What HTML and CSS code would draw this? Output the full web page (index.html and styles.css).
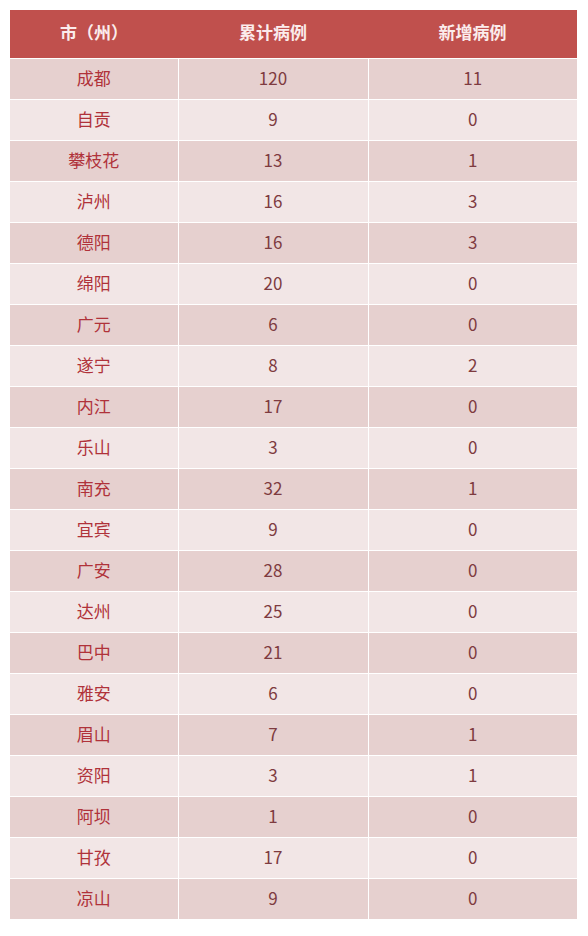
FILE: index.html
```html
<!DOCTYPE html>
<html lang="zh-CN">
<head>
<meta charset="utf-8">
<link rel="stylesheet" href="styles.css">
</head>
<body>
<table class="stats">
  <colgroup><col class="c1"><col class="c2"><col class="c3"></colgroup>
  <thead>
    <tr><th>市（州）</th><th>累计病例</th><th>新增病例</th></tr>
  </thead>
  <tbody>
    <tr><td class="name">成都</td><td>120</td><td>11</td></tr>
    <tr><td class="name">自贡</td><td>9</td><td>0</td></tr>
    <tr><td class="name">攀枝花</td><td>13</td><td>1</td></tr>
    <tr><td class="name">泸州</td><td>16</td><td>3</td></tr>
    <tr><td class="name">德阳</td><td>16</td><td>3</td></tr>
    <tr><td class="name">绵阳</td><td>20</td><td>0</td></tr>
    <tr><td class="name">广元</td><td>6</td><td>0</td></tr>
    <tr><td class="name">遂宁</td><td>8</td><td>2</td></tr>
    <tr><td class="name">内江</td><td>17</td><td>0</td></tr>
    <tr><td class="name">乐山</td><td>3</td><td>0</td></tr>
    <tr><td class="name">南充</td><td>32</td><td>1</td></tr>
    <tr><td class="name">宜宾</td><td>9</td><td>0</td></tr>
    <tr><td class="name">广安</td><td>28</td><td>0</td></tr>
    <tr><td class="name">达州</td><td>25</td><td>0</td></tr>
    <tr><td class="name">巴中</td><td>21</td><td>0</td></tr>
    <tr><td class="name">雅安</td><td>6</td><td>0</td></tr>
    <tr><td class="name">眉山</td><td>7</td><td>1</td></tr>
    <tr><td class="name">资阳</td><td>3</td><td>1</td></tr>
    <tr><td class="name">阿坝</td><td>1</td><td>0</td></tr>
    <tr><td class="name">甘孜</td><td>17</td><td>0</td></tr>
    <tr><td class="name">凉山</td><td>9</td><td>0</td></tr>
  </tbody>
</table>
</body>
</html>
```
FILE: styles.css
```css
html, body {
  margin: 0;
  padding: 0;
  background: #ffffff;
}
body {
  padding: 10px 0 0 10px;
  font-family: "Noto Sans CJK SC", "Noto Sans", sans-serif;
}
.stats {
  width: 567px;
  border-collapse: collapse;
  table-layout: fixed;
}
.c1 { width: 168px; }
.c2 { width: 190px; }
.c3 { width: 209px; }
.stats th {
  height: 44px;
  padding: 0 0 4px 0;
  background: #c0504d;
  color: #fbecec;
  font-size: 17px;
  line-height: 20px;
  font-weight: 700;
  text-align: center;
  vertical-align: middle;
}
.stats td {
  height: 38px;
  padding: 0 0 2px 0;
  text-align: center;
  vertical-align: middle;
  font-size: 17px;
  line-height: 20px;
  color: #7e3b40;
  border-top: 1px solid #ffffff;
  border-left: 1px solid #ffffff;
}
.stats td:first-child {
  border-left: none;
}
.stats td.name {
  color: #b0323a;
}
.stats tbody tr:nth-child(odd) td {
  background: #e6d0cf;
}
.stats tbody tr:nth-child(even) td {
  background: #f2e6e6;
}
```
